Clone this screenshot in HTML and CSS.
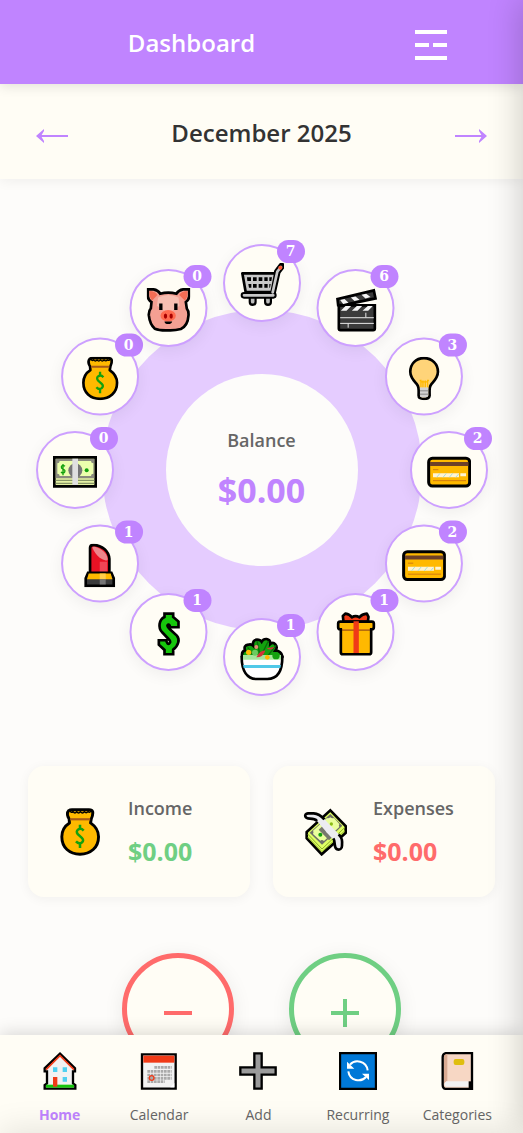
FILE: index.html
```html
<!DOCTYPE html>
<html lang="en">
<head>
    <meta charset="UTF-8">
    <meta name="viewport" content="width=device-width, initial-scale=1.0">
    <title>Dashboard</title>
    <link rel="stylesheet" href="styles.css">
</head>
<body>
    <!-- Icons -->
    <svg class="sprite" aria-hidden="true">
        <symbol id="cart" viewBox="0 0 132 132">
            <path d="M38 106v11M84 106v11" stroke="#000" stroke-width="24" stroke-linecap="round"/>
            <path d="M38 106v10M84 106v10" stroke="#bdbdbd" stroke-width="11" stroke-linecap="round"/>
            <path d="M12 97h88M98 88l14-62 13-17" fill="none" stroke="#000" stroke-width="20" stroke-linejoin="round" stroke-linecap="round"/>
            <path d="M7 31h99L95 87H17z" fill="#c8c8c8" stroke="#000" stroke-width="8" stroke-linejoin="round"/>
            <path d="M12 97h88M98 88l14-62 11-14" fill="none" stroke="#c8c8c8" stroke-width="8" stroke-linejoin="round" stroke-linecap="round"/>
            <path d="M21 43h12v11H22zM39 43h11v11H39zM56 43h11v11H56zM73 43h10v11H73zM88 43h8l-2 11h-6zM25 63h9v11h-7zM39 63h11v11H39zM56 63h11v11H56zM73 63h10v11H73zM88 63h4l-2 11h-2z" fill="#000"/>
            <circle cx="121" cy="14" r="6" fill="#ff5a36"/>
        </symbol>
        <symbol id="clapper" viewBox="0 0 132 132">
            <path d="M16 52h108v69q0 5-5 5H21q-5 0-5-5z" fill="#3b3b3b" stroke="#000" stroke-width="8"/>
            <path d="M12 33L121 7l5 24-96 20H14z" fill="#3b3b3b" stroke="#000" stroke-width="8"/>
            <path d="M20 36l13-3 12 11-16 4zM52 28l14-3 12 10-15 4zM84 20l14-3 13 10-15 4zM36 54h17L39 68H22zM70 54h16L72 68H55zM103 54h15l-14 14H87z" fill="#f5f5f5"/>
            <path d="M20 89h101M20 106h101M97 74v14M44 106v13" stroke="#e8e8e8" stroke-width="3"/>
        </symbol>
        <symbol id="bulb" viewBox="0 0 132 132">
            <path d="M66 5C41 5 25 23 25 46c0 18 12 28 21 39 6 8 4 18 4 32q0 10 16 10t17-10c0-14-2-24 4-32 9-11 21-21 21-39C108 23 91 5 66 5z" fill="#ffd479" stroke="#000" stroke-width="8"/>
            <path d="M57 93V72h-4m10 21V72m7 21V72m7 21V72h4M57 76h21" fill="none" stroke="#ffb900" stroke-width="4"/>
            <path d="M54 93h25v24q0 6-13 6t-12-6z" fill="#d2d2d2"/>
            <path d="M54 103h25M54 113h25" stroke="#888" stroke-width="3"/>
        </symbol>
        <symbol id="card" viewBox="0 0 132 132">
            <rect x="5" y="25" width="123" height="83" rx="11" fill="#ffb900" stroke="#000" stroke-width="9"/>
            <path d="M9 36h115v12H9z" fill="#6d4028"/>
            <path d="M18 59h16M18 92h99" stroke="#d27c12" stroke-width="3"/>
            <path d="M18 70h78v12H18zM100 70h17v9h-17z" fill="#fff4d2"/>
            <path d="M29 82l10-12M48 82l10-12M67 82l10-12M86 82l9-10" stroke="#a9dcd8" stroke-width="3"/>
        </symbol>
        <symbol id="gift" viewBox="0 0 132 132">
            <path d="M30 30l-2-18 8-7q13 2 19 11 11-7 23 0 7-10 22-11l5 10-2 15z" fill="#f03a17" stroke="#000" stroke-width="8" stroke-linejoin="round"/>
            <path d="M22 51h91v70q0 6-6 6H28q-6 0-6-6z" fill="#ffb900" stroke="#000" stroke-width="8"/>
            <rect x="14" y="29" width="107" height="23" rx="6" fill="#ffb900" stroke="#000" stroke-width="8"/>
            <path d="M26 53h83" stroke="#d27c12" stroke-width="7"/>
            <path d="M26 45h83v6H26z" fill="#ffb900"/>
            <path d="M60 28h16v95H60z" fill="#f03a17"/>
        </symbol>
        <symbol id="salad" viewBox="0 0 132 132">
            <path d="M7 61q-4-18 8-21-5-15 10-17 8-3 14 3-2-18 12-18 10 0 14 6 5-9 15-8 12 2 11 15 8-7 15 1 8 9 0 19 18 1 21 17z" fill="#13a10e" stroke="#000" stroke-width="8"/>
            <path d="M23 31l20 29M51 12l8 38M85 12L70 43M108 25L80 61" fill="none" stroke="#0b6a0b" stroke-width="4"/>
            <path d="M5 60h122c0 43-15 66-45 66H51C21 126 5 101 5 60z" fill="#fff" stroke="#000" stroke-width="8"/>
            <path d="M9 54h114v14H9z" fill="#a5e69b"/>
            <path d="M9 84h114l-2 9H11z" fill="#50c9e8"/>
            <circle cx="45" cy="47" r="9" fill="#6ccb5f"/>
            <circle cx="26" cy="46" r="8" fill="#ffb900"/>
            <circle cx="82" cy="61" r="7" fill="#ffb900"/>
            <circle cx="108" cy="56" r="11" fill="#13a10e"/>
            <path d="M49 61q19 1 27-20-16-2-27 20zM80 34q15 9 23-4z" fill="#d13438"/>
            <circle cx="49" cy="30" r="6" fill="#e98b73"/>
        </symbol>
        <symbol id="dollar" viewBox="0 0 132 132">
            <path d="M54 5h26v10l16 14v17H70c1-7-4-11-7-6-2 3 3 8 8 13l20 18c10 11 5 30-11 42v14H54v-13L37 98V85h23c-1 8 5 13 9 9 4-3 2-8-3-13L47 61C34 48 37 23 54 15z" fill="#16c60c" stroke="#000" stroke-width="8"/>
        </symbol>
        <symbol id="lipstick" viewBox="0 0 132 132">
            <path d="M36 91V13q0-9 11-9c25 2 45 18 47 42v45z" fill="#e81224" stroke="#000" stroke-width="8"/>
            <path d="M43 13c1-10 44 6 46 34-2 10-32 0-46-34z" fill="#ed858b"/>
            <path d="M65 55h22v35H65z" fill="#f04555"/>
            <path d="M30 88h70l7 16v23H23v-23z" fill="#3b3b3b" stroke="#000" stroke-width="8"/>
            <path d="M32 90h66l5 17H27z" fill="#ffb900"/>
            <path d="M65 90h18v17H65z" fill="#ffce4a"/>
            <path d="M65 107h18v16H65z" fill="#767676"/>
        </symbol>
        <symbol id="banknote" viewBox="0 0 132 132">
            <path d="M4 22h124v87H4z" fill="#e5f2a5" stroke="#000" stroke-width="8"/>
            <path d="M8 27h116v58H8z" fill="#8a8a7e"/>
            <path d="M20 33h94q0 7 7 7v31q-7 0-7 7H20q0-7-7-7V40q7 0 7-7z" fill="#ecffad"/>
            <circle cx="67" cy="61" r="21" fill="#767676"/>
            <path d="M36 49q-8-6-11 1-1 5 5 7 8 3 5 9-5 6-11 0M30 42v34" fill="none" stroke="#13a10e" stroke-width="4"/>
            <circle cx="101" cy="61" r="6" fill="#13a10e"/>
            <path d="M8 91h116M8 100h116" stroke="#879567" stroke-width="4"/>
            <path d="M58 26h17v79H58z" fill="#e0e0e0"/>
        </symbol>
        <symbol id="moneybag" viewBox="0 0 132 132">
            <path d="M36 30l-3-6q-4-10 2-17 4-3 13-2h40q11-1 13 6 1 9-4 19l-2 11c13 9 22 22 22 38 0 30-22 48-51 48S16 109 16 79c0-16 7-29 21-38z" fill="#ffb900" stroke="#000" stroke-width="8" stroke-linejoin="round"/>
            <path d="M38 7q4 8 9 3 5 7 10 0 5 7 10 0 6 7 11 0 5 6 10 0 6 4 9-3" fill="none" stroke="#000" stroke-width="4"/>
            <path d="M39 31h55" stroke="#a65a18" stroke-width="6"/>
            <path d="M76 62q-7-8-15-3-7 5-1 13l11 10q7 7 0 13-8 6-16-3M66 46v13m0 38v13" fill="none" stroke="#13a10e" stroke-width="7"/>
        </symbol>
        <symbol id="pig" viewBox="0 0 132 132">
            <path d="M4 4h17q14 2 20 13 24-7 49 0 6-11 20-13h18v21q-1 11-10 17l3 20q6 7 5 20-2 31-23 41-18 5-38 4-26 1-40-5Q10 109 7 82q-1-14 6-21l2-19Q5 36 4 25z" fill="#f4a093" stroke="#000" stroke-width="8"/>
            <path d="M9 9q17 0 24 12L17 37Q9 34 9 9zM123 9q-18 0-25 12l17 16q8-3 8-28z" fill="#f46d55"/>
            <path d="M35 28q30-15 61 0l3 25-20 14H52L31 53z" fill="#f7bfb2"/>
            <path d="M38 46h10v20H38zM83 46h10v20H83z" fill="#000"/>
            <ellipse cx="65" cy="83" rx="23" ry="17" fill="#ff6a50"/>
            <ellipse cx="57" cy="84" rx="5" ry="8" fill="#a80000"/>
            <ellipse cx="74" cy="84" rx="5" ry="8" fill="#a80000"/>
            <path d="M54 100h23q-2 8-12 8t-11-8z" fill="#000"/>
        </symbol>
        <symbol id="flying-money" viewBox="0 0 144 144">
            <path d="M88 7l46 47v21l-72 64-45-48V72z" fill="#dfff65" stroke="#000" stroke-width="8"/>
            <path d="M20 78l43 45 69-65M20 87l43 44 69-63" fill="none" stroke="#8caf25" stroke-width="3"/>
            <path d="M88 18l36 35-61 57-37-36z" fill="#6f7068"/>
            <path d="M88 28q5 4 11 2l16 18q-3 6 0 9l-46 42q-6-5-11-1L36 78q3-6 0-10l42-38q5 2 10-2z" fill="#eaff9c"/>
            <path d="M53 65l15-14 32 31-16 15z" fill="#77786d"/>
            <circle cx="58" cy="80" r="6" fill="#13a10e"/>
            <circle cx="91" cy="48" r="5" fill="#8bbd18"/>
            <path d="M21 16h17c22 1 32 18 45 31l26 27c15 13 15 21 14 39 0 10-7 13-14 11-8-2-7-9-8-17C97 88 82 82 73 68L48 39c-6-7-12-7-21-7-17 0-19-14-6-16z" fill="#ececf0"/>
            <path d="M48 39c-6-7-12-7-21-7-17 0-19-14-6-16h17c15 1 24 9 32 18M97 91c4 7 3 11 4 16 1 8 0 15 8 17 7 2 14-1 14-11 1-16 1-22-10-34" fill="none" stroke="#000" stroke-width="8"/>
        </symbol>
        <symbol id="house" viewBox="0 0 114 114">
            <path d="M57 5l45 44v9h-6v36l7 5v11H11V99l7-5V58h-7v-9z" fill="#f2f2f2" stroke="#000" stroke-width="7"/>
            <path d="M15 53l42-42 42 42" fill="none" stroke="#f03a17" stroke-width="5"/>
            <path d="M15 98h84v9H15z" fill="#16c60c"/>
            <path d="M36 46h13v14H36zM65 46h13v14H65zM65 75h13v14H65z" fill="#50d0f0"/>
            <path d="M36 75h13v29H36z" fill="#f03a17"/>
        </symbol>
        <symbol id="calendar" viewBox="0 0 114 114">
            <path d="M6 7h101v103H6z" fill="#f2f2f2" stroke="#000" stroke-width="7"/>
            <path d="M10 11h93v21H10z" fill="#f03a17"/>
            <path d="M43 46h52M22 58h73M22 69h73M22 79h73M22 89h52" stroke="#aaa" stroke-width="8" stroke-dasharray="8 2"/>
            <circle cx="35" cy="78" r="7" fill="#aaa" stroke="#f03a17" stroke-width="4"/>
            <path d="M103 93L91 106h12z" fill="#fff"/>
        </symbol>
        <symbol id="plus" viewBox="0 0 114 114">
            <path d="M46 4h22v42h42v22H68v42H46V68H4V46h42z" fill="#9b9b9b" stroke="#000" stroke-width="7"/>
        </symbol>
        <symbol id="recurring" viewBox="0 0 114 114">
            <path d="M3 3h108v108H3z" fill="#0078d7" stroke="#000" stroke-width="7"/>
            <path d="M33 38c15-17 49-12 53 17M81 75c-15 17-49 12-53-17" fill="none" stroke="#fff" stroke-width="6"/>
            <path d="M24 29v21h22zM90 84V65H69z" fill="#fff"/>
        </symbol>
        <symbol id="book" viewBox="0 0 114 114">
            <path d="M25 3h77v108H26q-12 0-12-13V15Q14 5 25 3z" fill="#f7d7c4" stroke="#000" stroke-width="7"/>
            <path d="M18 14q0-8 10-8v82q-10 2-10 12z" fill="#d9aa92"/>
            <path d="M25 88h67v16H24q-10-7 1-16z" fill="#f2f2f2"/>
            <path d="M92 88h9v20h-9z" fill="#000"/>
            <rect x="47" y="21" width="32" height="18" rx="6" fill="#dfbe0e"/>
        </symbol>
    </svg>

    <header class="header">
        <h1>Dashboard</h1>
        <button class="menu-btn" aria-label="Menu">
            <svg width="32" height="30" viewBox="0 0 32 30"><path d="M0 2h32M0 15h14M18 15h14M0 28h32" stroke="currentColor" stroke-width="4"/></svg>
        </button>
    </header>

    <div class="month-nav">
        <button aria-label="Previous month">
            <svg width="32" height="14" viewBox="0 0 32 14"><path d="M1 7h31" stroke="currentColor" stroke-width="2"/><path d="M0 7l8-7v2L5 7l3 5v2z" fill="currentColor"/></svg>
        </button>
        <h2>December 2025</h2>
        <button aria-label="Next month">
            <svg width="32" height="14" viewBox="0 0 32 14"><path d="M0 7h31" stroke="currentColor" stroke-width="2"/><path d="M32 7l-8-7v2l3 5-3 5v2z" fill="currentColor"/></svg>
        </button>
    </div>

    <main>
        <div class="wheel">
            <div class="disc">
                <div class="balance">
                    <span class="label">Balance</span>
                    <span class="balance-amount">$0.00</span>
                </div>
            </div>
            <button class="category" aria-label="Shopping"><svg><use href="#cart"/></svg><span class="badge">7</span></button>
            <button class="category" aria-label="Entertainment"><svg><use href="#clapper"/></svg><span class="badge">6</span></button>
            <button class="category" aria-label="Utilities"><svg><use href="#bulb"/></svg><span class="badge">3</span></button>
            <button class="category" aria-label="Credit card"><svg><use href="#card"/></svg><span class="badge">2</span></button>
            <button class="category" aria-label="Debit card"><svg><use href="#card"/></svg><span class="badge">2</span></button>
            <button class="category" aria-label="Gifts"><svg><use href="#gift"/></svg><span class="badge">1</span></button>
            <button class="category" aria-label="Food"><svg><use href="#salad"/></svg><span class="badge">1</span></button>
            <button class="category" aria-label="Other"><svg><use href="#dollar"/></svg><span class="badge">1</span></button>
            <button class="category" aria-label="Beauty"><svg><use href="#lipstick"/></svg><span class="badge">1</span></button>
            <button class="category" aria-label="Cash"><svg><use href="#banknote"/></svg><span class="badge">0</span></button>
            <button class="category" aria-label="Salary"><svg><use href="#moneybag"/></svg><span class="badge">0</span></button>
            <button class="category" aria-label="Savings"><svg><use href="#pig"/></svg><span class="badge">0</span></button>
        </div>

        <div class="summary">
            <div class="summary-card">
                <svg><use href="#moneybag"/></svg>
                <div class="summary-text">
                    <span class="label">Income</span>
                    <span class="amount income">$0.00</span>
                </div>
            </div>
            <div class="summary-card">
                <svg><use href="#flying-money"/></svg>
                <div class="summary-text">
                    <span class="label">Expenses</span>
                    <span class="amount expense">$0.00</span>
                </div>
            </div>
        </div>

        <div class="actions">
            <button class="action expense" aria-label="Add expense">
                <svg viewBox="0 0 28 28"><path d="M0 14h28" stroke="currentColor" stroke-width="4"/></svg>
            </button>
            <button class="action income" aria-label="Add income">
                <svg viewBox="0 0 28 28"><path d="M0 14h28M14 0v28" stroke="currentColor" stroke-width="4"/></svg>
            </button>
        </div>
    </main>

    <nav class="bottom-nav">
        <a href="#home" class="active"><svg><use href="#house"/></svg>Home</a>
        <a href="#calendar-page"><svg><use href="#calendar"/></svg>Calendar</a>
        <a href="#add"><svg><use href="#plus"/></svg>Add</a>
        <a href="#recurring-page"><svg><use href="#recurring"/></svg>Recurring</a>
        <a href="#categories"><svg><use href="#book"/></svg>Categories</a>
    </nav>

    <aside class="side-menu"></aside>
    <div class="bottom-sheet"></div>
</body>
</html>
```

FILE: styles.css
```css
* {
    box-sizing: border-box;
}

body {
    font-family: "Open Sans", "Noto Sans", sans-serif;
    background-color: #fdfcfa;
    color: #333;
    margin: 0;
    height: 100vh;
    overflow: hidden;
    display: flex;
    flex-direction: column;
}

h1, h2 {
    margin: 0;
    font-size: 24px;
    line-height: 32px;
    font-weight: 600;
}

button {
    font-family: inherit;
    background: none;
    border: none;
    padding: 0;
    cursor: pointer;
}

svg {
    display: block;
}

.sprite {
    position: absolute;
    width: 0;
    height: 0;
}

.header {
    display: flex;
    align-items: center;
    flex-shrink: 0;
    padding: 21px 44px 19px 0;
    background-color: #c084ff;
    color: white;
    box-shadow: 0 2px 12px rgba(0, 0, 0, 0.12);
    z-index: 2;
}

.header h1 {
    flex: 1;
    text-align: center;
    line-height: 44px;
}

.menu-btn {
    width: 96px;
    height: 44px;
    padding-top: 4px;
    display: grid;
    place-items: center;
    color: white;
}

.month-nav {
    display: flex;
    justify-content: space-between;
    align-items: center;
    flex-shrink: 0;
    padding: 25px 28px 22px;
    background-color: #fffdf5;
    box-shadow: 0 2px 12px rgba(0, 0, 0, 0.06);
    z-index: 1;
}

.month-nav button {
    width: 48px;
    height: 48px;
    padding-top: 6px;
    display: grid;
    place-items: center;
    color: #c084ff;
}

main {
    flex: 1;
    min-height: 0;
    padding: 65px 28px;
    overflow-y: auto;
    scrollbar-width: none;
}

/* Category wheel */
.wheel {
    display: grid;
    place-items: center;
    height: 452px;
    margin-bottom: 70px;
}

.wheel > * {
    grid-area: 1 / 1;
}

.disc {
    display: grid;
    place-items: center;
    width: 320px;
    height: 320px;
    border-radius: 50%;
    background-color: #e5ccff;
}

.balance {
    width: 192px;
    height: 192px;
    border-radius: 50%;
    background-color: #fdfcfa;
    display: flex;
    flex-direction: column;
    justify-content: center;
    align-items: center;
    gap: 12px;
}

.label {
    font-size: 18px;
    line-height: 28px;
    font-weight: 600;
    color: #666;
}

.balance-amount {
    font-size: 34px;
    line-height: 48px;
    font-weight: 700;
    color: #c084ff;
}

.category {
    position: relative;
    display: grid;
    place-items: center;
    width: 78px;
    height: 78px;
    padding-top: 4px;
    border: 2px solid #cda0ff;
    border-radius: 50%;
    background-color: #fffdf5;
    box-shadow: 0 4px 16px rgba(0, 0, 0, 0.06);
    transform: rotate(var(--angle)) translateY(-187px) rotate(calc(-1 * var(--angle)));
}

.category:nth-child(2) { --angle: 0deg; }
.category:nth-child(3) { --angle: 30deg; }
.category:nth-child(4) { --angle: 60deg; }
.category:nth-child(5) { --angle: 90deg; }
.category:nth-child(6) { --angle: 120deg; }
.category:nth-child(7) { --angle: 150deg; }
.category:nth-child(8) { --angle: 180deg; }
.category:nth-child(9) { --angle: 210deg; }
.category:nth-child(10) { --angle: 240deg; }
.category:nth-child(11) { --angle: 270deg; }
.category:nth-child(12) { --angle: 300deg; }
.category:nth-child(13) { --angle: 330deg; }

.category svg {
    width: 44px;
    height: 44px;
}

.badge {
    position: absolute;
    top: -6px;
    right: -6px;
    width: 28px;
    border-radius: 12px;
    background-color: #c084ff;
    color: white;
    font-family: "DejaVu Serif", serif;
    font-size: 14px;
    line-height: 23px;
    font-weight: 700;
    text-align: center;
}

/* Income and expenses */
.summary {
    display: grid;
    grid-template-columns: 1fr 1fr;
    gap: 23px;
    margin-bottom: 56px;
}

.summary-card {
    display: flex;
    align-items: center;
    gap: 24px;
    padding: 28px;
    border-radius: 16px;
    background-color: #fffdf5;
    box-shadow: 0 2px 12px rgba(0, 0, 0, 0.05);
}

.summary-card svg {
    width: 48px;
    height: 48px;
}

.summary-text {
    display: flex;
    flex-direction: column;
    gap: 12px;
}

.amount {
    font-size: 25px;
    line-height: 35px;
    font-weight: 700;
}

.income {
    color: #6fcf83;
}

.expense {
    color: #ff6b6b;
}

.actions {
    display: flex;
    justify-content: center;
    gap: 55px;
}

.action {
    display: grid;
    place-items: center;
    width: 112px;
    height: 112px;
    padding-top: 8px;
    border: 5px solid;
    border-radius: 50%;
    background-color: #fffdf5;
    box-shadow: 0 4px 20px rgba(0, 0, 0, 0.08);
}

.action svg {
    width: 28px;
    height: 28px;
}

.bottom-nav {
    display: grid;
    grid-template-columns: repeat(5, 1fr);
    flex-shrink: 0;
    padding: 17px 16px 8px 10px;
    background-color: #fffdf5;
    box-shadow: 0 -2px 16px rgba(0, 0, 0, 0.15);
    z-index: 2;
}

.bottom-nav a {
    display: flex;
    flex-direction: column;
    align-items: center;
    gap: 15px;
    font-size: 14px;
    line-height: 20px;
    color: #666;
    text-decoration: none;
}

.bottom-nav a.active {
    color: #c084ff;
    font-weight: 700;
}

.bottom-nav svg {
    width: 38px;
    height: 38px;
}

.side-menu {
    position: fixed;
    top: 0;
    left: 100%;
    width: 280px;
    height: 100%;
    box-shadow: -4px 0 30px rgba(0, 0, 0, 0.18);
    z-index: 3;
}

.bottom-sheet {
    position: fixed;
    top: 100%;
    left: 0;
    width: 100%;
    height: 50%;
    box-shadow: 0 -4px 30px rgba(0, 0, 0, 0.1);
    z-index: 3;
}
```
